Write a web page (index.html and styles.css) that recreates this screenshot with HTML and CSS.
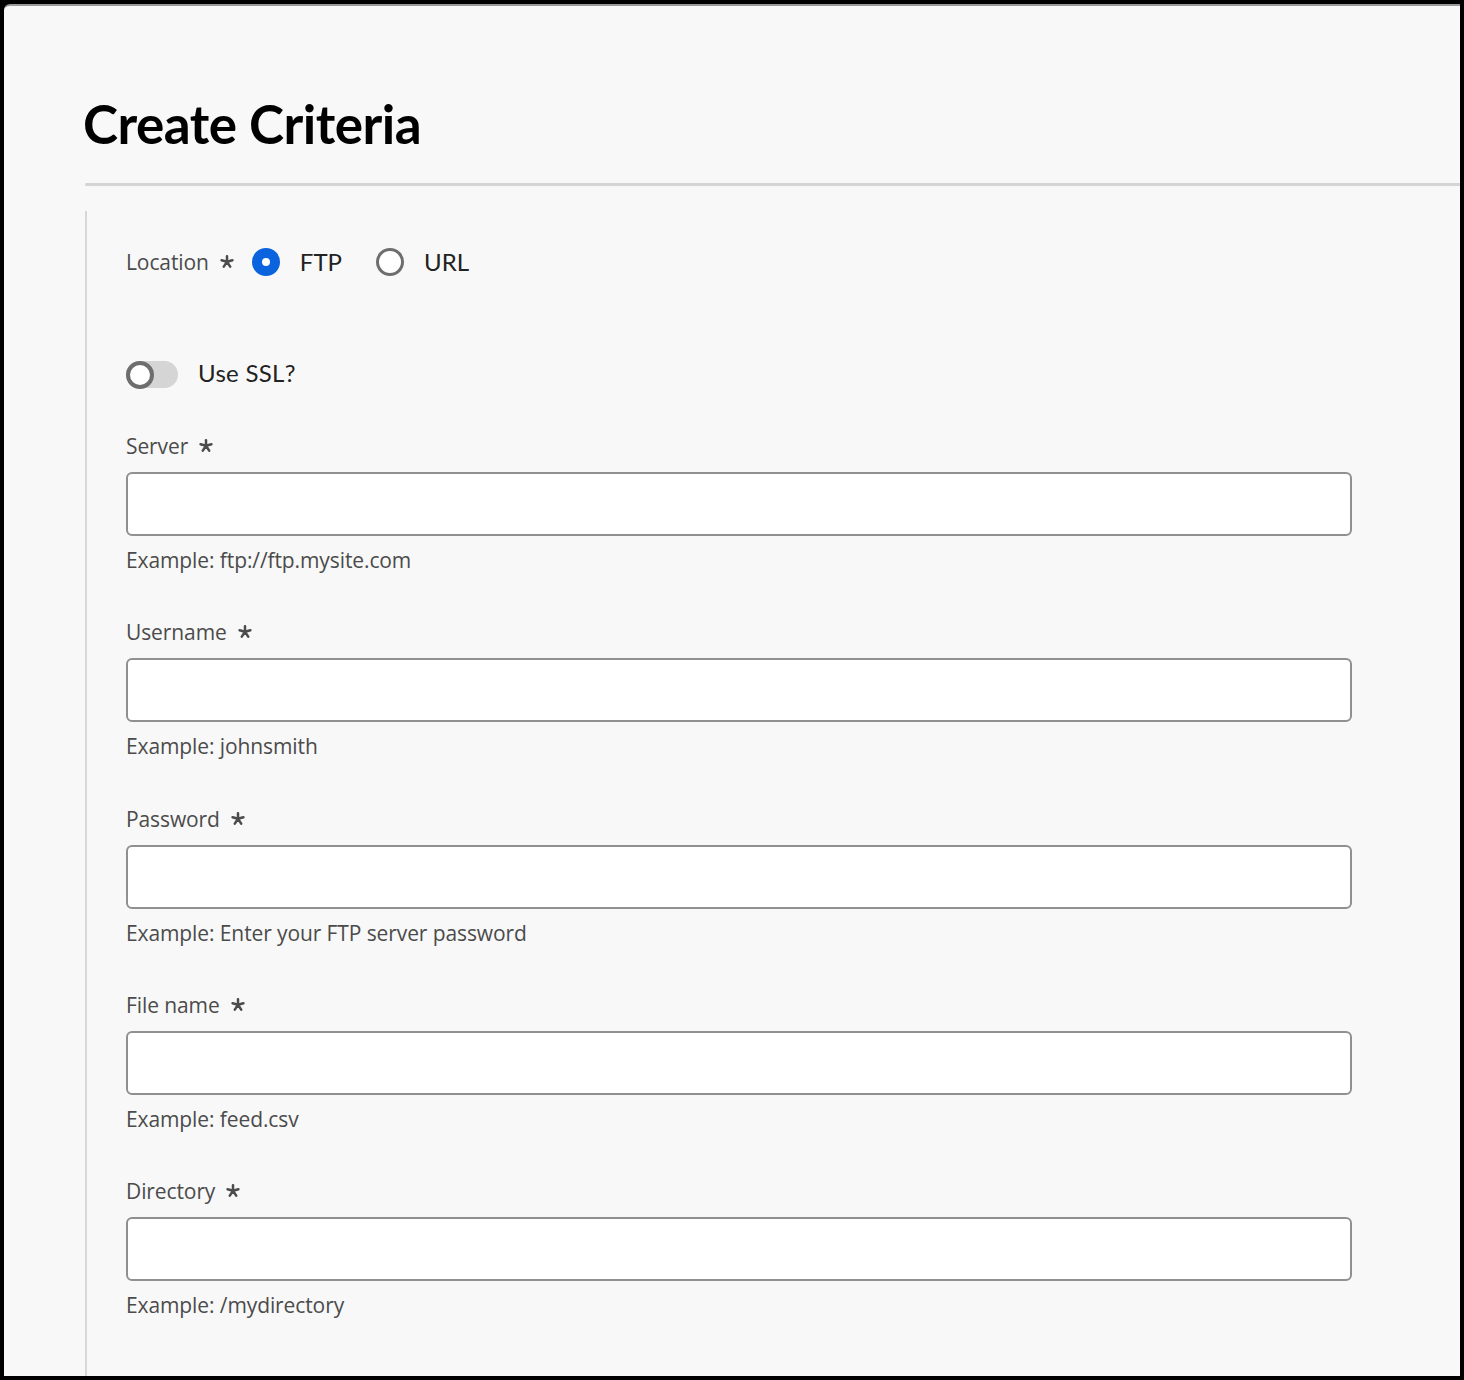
FILE: index.html
```html
<!DOCTYPE html>
<html lang="en">
<head>
<meta charset="utf-8">
<title>Create Criteria</title>
<link rel="stylesheet" href="styles.css">
</head>
<body>
<div class="frame">
  <header class="page-head">
    <h1 class="title">Create Criteria</h1>
    <div class="divider"></div>
  </header>
  <div class="panel">
    <div class="location-row">
      <span class="field-label">Location <svg class="req" viewBox="0 0 14 14" aria-hidden="true"><path d="M7 1.2v5.6M7 6.8L1.6 5.2M7 6.8l5.4-1.6M7 6.8L3.8 11.6M7 6.8l3.2 4.8"/></svg></span>
      <label class="radio checked"><span class="radio-dot"></span><span class="radio-text">FTP</span></label>
      <label class="radio"><span class="radio-dot"></span><span class="radio-text">URL</span></label>
    </div>
    <div class="switch-row">
      <span class="switch"><span class="switch-knob"></span></span>
      <span class="switch-text">Use SSL?</span>
    </div>

    <div class="field">
      <span class="field-label">Server <svg class="req" viewBox="0 0 14 14" aria-hidden="true"><path d="M7 1.2v5.6M7 6.8L1.6 5.2M7 6.8l5.4-1.6M7 6.8L3.8 11.6M7 6.8l3.2 4.8"/></svg></span>
      <div class="input"></div>
      <span class="help">Example: ftp://ftp.mysite.com</span>
    </div>
    <div class="field">
      <span class="field-label">Username <svg class="req" viewBox="0 0 14 14" aria-hidden="true"><path d="M7 1.2v5.6M7 6.8L1.6 5.2M7 6.8l5.4-1.6M7 6.8L3.8 11.6M7 6.8l3.2 4.8"/></svg></span>
      <div class="input"></div>
      <span class="help">Example: johnsmith</span>
    </div>
    <div class="field">
      <span class="field-label">Password <svg class="req" viewBox="0 0 14 14" aria-hidden="true"><path d="M7 1.2v5.6M7 6.8L1.6 5.2M7 6.8l5.4-1.6M7 6.8L3.8 11.6M7 6.8l3.2 4.8"/></svg></span>
      <div class="input"></div>
      <span class="help">Example: Enter your FTP server password</span>
    </div>
    <div class="field">
      <span class="field-label">File name <svg class="req" viewBox="0 0 14 14" aria-hidden="true"><path d="M7 1.2v5.6M7 6.8L1.6 5.2M7 6.8l5.4-1.6M7 6.8L3.8 11.6M7 6.8l3.2 4.8"/></svg></span>
      <div class="input"></div>
      <span class="help">Example: feed.csv</span>
    </div>
    <div class="field">
      <span class="field-label">Directory <svg class="req" viewBox="0 0 14 14" aria-hidden="true"><path d="M7 1.2v5.6M7 6.8L1.6 5.2M7 6.8l5.4-1.6M7 6.8L3.8 11.6M7 6.8l3.2 4.8"/></svg></span>
      <div class="input"></div>
      <span class="help">Example: /mydirectory</span>
    </div>
  </div>
</div>
</body>
</html>
```

FILE: styles.css
```css
html, body {
  margin: 0;
  padding: 0;
  background: #000;
  height: 1380px;
  overflow: hidden;
}
body {
  padding: 4px;
  box-sizing: border-box;
  font-family: "Lato", "Open Sans", sans-serif;
}
.frame {
  height: 1372px;
  box-sizing: border-box;
  background: #f8f8f8;
  border-top: 2px solid #9a9a9a;
  border-top-left-radius: 6px;
  overflow: hidden;
  padding-left: 81px;
}
.page-head {
  padding-top: 86px;
}
.title {
  margin: 0;
  font-size: 53px;
  line-height: 64px;
  font-weight: 700;
  color: #000;
  letter-spacing: -0.5px;
  margin-left: -2px;
}
.divider {
  margin-top: 27px;
  height: 3px;
  background: #d4d4d4;
  border-radius: 2px 0 0 2px;
}
.panel {
  margin-top: 25px;
  border-left: 2px solid #d7d7d7;
  padding: 37px 0 0 39px;
  height: 1200px;
  width: 1226px;
}
.field-label {
  display: inline-flex;
  align-items: center;
  font-family: "Open Sans", "Lato", sans-serif;
  font-size: 21px;
  line-height: 24px;
  color: #4b4b4b;
  letter-spacing: -0.1px;
}
.req {
  width: 14px;
  height: 14px;
  margin-left: 11px;
  fill: none;
  stroke: #4b4b4b;
  stroke-width: 2.5;
  stroke-linecap: round;
}
.location-row {
  display: flex;
  align-items: center;
  height: 28px;
}
.location-row .field-label {
  margin-right: 18px;
}
.radio {
  display: inline-flex;
  align-items: center;
  margin-right: 34px;
}
.radio-dot {
  width: 28px;
  height: 28px;
  box-sizing: border-box;
  border-radius: 50%;
  border: 3px solid #6e6e6e;
  background: #fff;
}
.radio.checked .radio-dot {
  border: 10px solid #0b64dd;
}
.radio-text {
  margin-left: 20px;
  font-size: 24px;
  color: #222;
  line-height: 28px;
}
.switch-row {
  display: flex;
  align-items: center;
  margin-top: 84px;
  height: 28px;
}
.switch {
  position: relative;
  width: 52px;
  height: 27px;
  border-radius: 14px;
  background: #d5d5d5;
}
.switch-knob {
  position: absolute;
  left: 0;
  top: 0;
  width: 28px;
  height: 28px;
  box-sizing: border-box;
  border-radius: 50%;
  border: 4px solid #6e6e6e;
  background: #fff;
}
.switch-text {
  margin-left: 20px;
  font-size: 24px;
  line-height: 28px;
  color: #222;
  letter-spacing: 0.3px;
  margin-top: -2px;
}
.field {
  display: flex;
  flex-direction: column;
  align-items: flex-start;
  margin-top: 46px;
}
.field + .field {
  margin-top: 48.25px;
}
.input {
  margin-top: 14px;
  width: 100%;
  height: 64px;
  box-sizing: border-box;
  border: 2px solid #909090;
  border-radius: 6px;
  background: #fff;
}
.help {
  margin-top: 12px;
  font-family: "Open Sans", "Lato", sans-serif;
  font-size: 21px;
  line-height: 24px;
  color: #4b4b4b;
  letter-spacing: -0.1px;
}
```
